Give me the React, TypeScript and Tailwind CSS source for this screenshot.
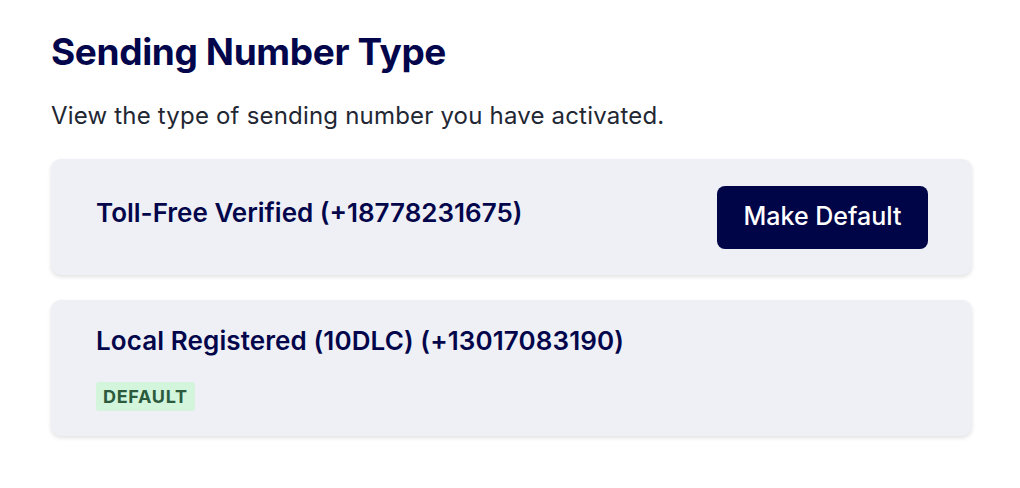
export default function App() {
  return (
    <div className="w-[1020px] h-[488px] bg-white pl-[51px] pr-[48px] pt-[28px]" style={{ fontFamily: "Inter, 'Noto Sans', sans-serif" }}>
      <h1 className="text-[37px] leading-[48px] font-bold text-[#03064b] tracking-[-0.01em]">Sending Number Type</h1>
      <p className="mt-[24px] text-[24px] leading-[32px] text-[#222733] tracking-[0.008em]">View the type of sending number you have activated.</p>
      <div className="mt-[27px] flex flex-col gap-[25px]">
        <div className="bg-[#eef0f5] rounded-[10px] shadow-[0_2px_4px_rgba(0,0,0,0.12)] pl-[45px] pr-[44px] py-[26.5px] flex items-center justify-between">
          <div className="text-[26px] leading-[30px] font-semibold text-[#03064b] -mt-[9px]">Toll-Free Verified (+18778231675)</div>
          <button className="w-[211px] h-[63px] rounded-[8px] bg-[#000548] text-white text-[25px] font-medium">Make Default</button>
        </div>
        <div className="bg-[#eef0f5] rounded-[10px] shadow-[0_2px_4px_rgba(0,0,0,0.12)] pl-[45px] pr-[44px] pt-[26px] pb-[25px] flex flex-col items-start gap-[26px]">
          <div className="text-[26px] leading-[30px] font-semibold text-[#03064b] tracking-[0.004em]">Local Registered (10DLC) (+13017083190)</div>
          <span className="bg-[#d2f5dc] text-[#2b5a3c] rounded-[3px] px-[7px] h-[29px] flex items-center text-[18px] font-bold tracking-[0.04em]">DEFAULT</span>
        </div>
      </div>
    </div>
  );
}
